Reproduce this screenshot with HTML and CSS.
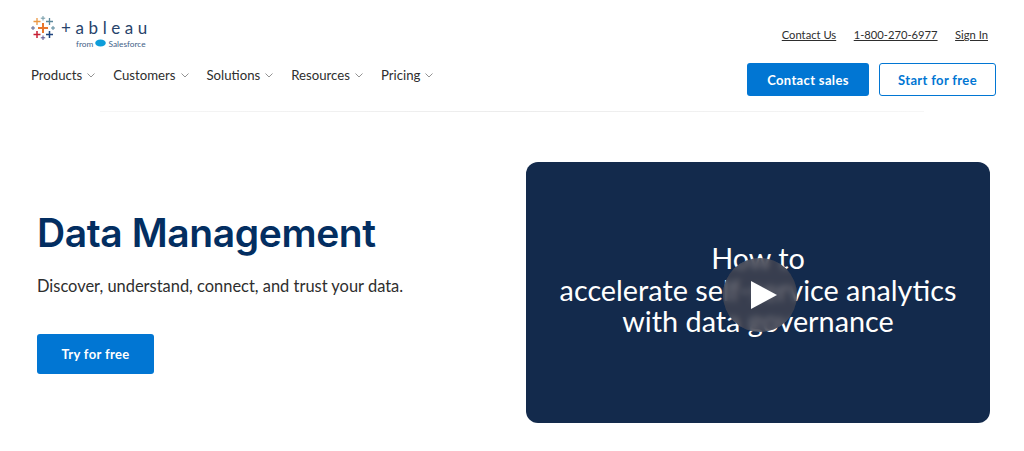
FILE: index.html
```html
<!DOCTYPE html>
<html lang="en">

<head>
    <meta charset="UTF-8">
    <meta name="viewport" content="width=device-width, initial-scale=1.0">
    <title>Data Management</title>
    <link rel="stylesheet" href="styles.css">
</head>

<body>
    <header class="site-header">
        <div class="header-left">
            <a class="logo" href="#">
                <svg class="logo-mark" width="24" height="24" viewBox="0 0 24 24" fill="none" stroke-linecap="butt">
                    <path d="M12 7v10M7 12h10" stroke="#e8762d" stroke-width="2" />
                    <path d="M6 2v7M2.500 5.500h7" stroke="#eb9744" stroke-width="1.300" />
                    <path d="M18.500 2v7M15 5.500h7" stroke="#5b879b" stroke-width="1.300" />
                    <path d="M6 15v7M2.500 18.500h7" stroke="#c72035" stroke-width="1.500" />
                    <path d="M18.500 15v7M15 18.500h7" stroke="#1f447e" stroke-width="1.500" />
                    <path d="M12 0v4.500M9.800 2.200h4.400" stroke="#7099a6" stroke-width="1" />
                    <path d="M12 19.500V24M9.800 21.800h4.400" stroke="#59508f" stroke-width="1" />
                    <path d="M2 10v4M0 12h4" stroke="#5b6591" stroke-width="1" />
                    <path d="M22 10v4M20 12h4" stroke="#59879b" stroke-width="1" />
                </svg>
                <span class="logo-text">
                    <span class="logo-word">+ableau</span>
                    <span class="logo-from">from
                        <svg width="11" height="8" viewBox="0 0 12 8">
                            <ellipse cx="6" cy="4" rx="5.800" ry="3.800" fill="#0d9dda" />
                        </svg>
                        Salesforce</span>
                </span>
            </a>
            <nav class="main-nav">
                <a href="#">Products<svg class="caret" viewBox="0 0 8 5"><path d="M.5.500 4 4 7.500.500" /></svg></a>
                <a href="#">Customers<svg class="caret" viewBox="0 0 8 5"><path d="M.5.500 4 4 7.500.500" /></svg></a>
                <a href="#">Solutions<svg class="caret" viewBox="0 0 8 5"><path d="M.5.500 4 4 7.500.500" /></svg></a>
                <a href="#">Resources<svg class="caret" viewBox="0 0 8 5"><path d="M.5.500 4 4 7.500.500" /></svg></a>
                <a href="#">Pricing<svg class="caret" viewBox="0 0 8 5"><path d="M.5.500 4 4 7.500.500" /></svg></a>
            </nav>
        </div>
        <div class="header-right">
            <div class="util-links">
                <a href="#">Contact Us</a>
                <a href="#">1-800-270-6977</a>
                <a href="#">Sign In</a>
            </div>
            <div class="header-buttons">
                <a class="btn btn-solid btn-sales" href="#">Contact sales</a>
                <a class="btn btn-outline" href="#">Start for free</a>
            </div>
        </div>
    </header>
    <div class="header-rule"></div>

    <main class="hero">
        <section class="hero-copy">
            <h1>Data Management</h1>
            <p>Discover, understand, connect, and trust your data.</p>
            <a class="btn btn-solid btn-try" href="#">Try for free</a>
        </section>
        <section class="video-card">
            <div class="video-title">How to<br>accelerate self-service analytics<br>with data governance</div>
            <button class="play-btn" aria-label="Play">
                <svg width="26" height="28" viewBox="0 0 26 28"><path d="M0 0 26 14 0 28z" fill="#fff" /></svg>
            </button>
        </section>
    </main>
</body>

</html>
```

FILE: styles.css
```css
body {
    margin: 0;
    background-color: #fff;
    font-family: Lato, "Open Sans", sans-serif;
    color: #2e2e2e;
    overflow: hidden;
}

a {
    text-decoration: none;
    color: inherit;
}

.site-header {
    display: flex;
    justify-content: space-between;
    height: 111px;
    padding: 0 28px 0 31px;
    box-sizing: border-box;
}

.logo {
    display: flex;
    gap: 6px;
    height: 33px;
    margin-top: 15px;
}

.logo-mark {
    margin-top: 1px;
}

.logo-text {
    display: flex;
    flex-direction: column;
    align-items: flex-start;
}

.logo-word {
    font-size: 17px;
    line-height: 26px;
    letter-spacing: 4.600px;
    color: #27436b;
}

.logo-from {
    margin-left: 15px;
    margin-top: -2px;
    font-size: 8.300px;
    line-height: 11px;
    color: #3f6188;
}

.main-nav {
    display: flex;
    gap: 18px;
    margin-top: 18px;
    font-size: 13.200px;
    line-height: 18px;
}

.main-nav a {
    display: flex;
    align-items: center;
}

.caret {
    width: 8px;
    height: 5px;
    margin-left: 5px;
    fill: none;
    stroke: #777;
    stroke-width: 0.8;
}

.header-right {
    display: flex;
    flex-direction: column;
    align-items: flex-end;
}

.util-links {
    display: flex;
    gap: 17.500px;
    margin-top: 27px;
    margin-right: 8px;
    font-size: 11.200px;
    line-height: 16px;
}

.util-links a {
    text-decoration: underline;
}

.header-buttons {
    display: flex;
    gap: 10px;
    margin-top: 20px;
}

.btn {
    display: flex;
    align-items: center;
    justify-content: center;
    box-sizing: border-box;
    border-radius: 3px;
    font-size: 13px;
    font-weight: 700;
    letter-spacing: 0.350px;
}

.btn-solid {
    background-color: #0176d3;
    color: #fff;
}

.btn-sales {
    width: 122px;
    height: 33px;
}

.btn-outline {
    width: 117px;
    height: 33px;
    border: 1px solid #0176d3;
    color: #0176d3;
}

.header-rule {
    height: 1px;
    margin: 0 100px;
    background: linear-gradient(to right, #f6f6f6, #ececec 50%, #f6f6f6);
}

.hero {
    display: flex;
    justify-content: space-between;
    padding: 50px 34px 0 37px;
}

.hero-copy {
    padding-top: 46px;
}

h1 {
    margin: 0;
    font-family: Inter, sans-serif;
    font-size: 39px;
    line-height: 50px;
    font-weight: 600;
    letter-spacing: -0.4px;
    color: #032e61;
}

.hero-copy p {
    margin: 17px 0 0;
    font-size: 16.450px;
    line-height: 22px;
}

.btn-try {
    width: 117px;
    height: 40px;
    margin-top: 37px;
}

.video-card {
    position: relative;
    display: flex;
    align-items: center;
    justify-content: center;
    width: 464px;
    height: 261px;
    border-radius: 12px;
    background-color: #132a4c;
}

.video-title {
    margin-top: -4px;
    font-size: 28.800px;
    line-height: 31.500px;
    color: #fff;
    text-align: center;
}

.play-btn {
    position: absolute;
    left: 197px;
    top: 96px;
    display: flex;
    align-items: center;
    justify-content: center;
    width: 74px;
    height: 74px;
    padding: 0 0 0 8px;
    border: none;
    border-radius: 50%;
    background-color: rgba(70, 70, 80, 0.75);
    backdrop-filter: blur(3px);
}
```
